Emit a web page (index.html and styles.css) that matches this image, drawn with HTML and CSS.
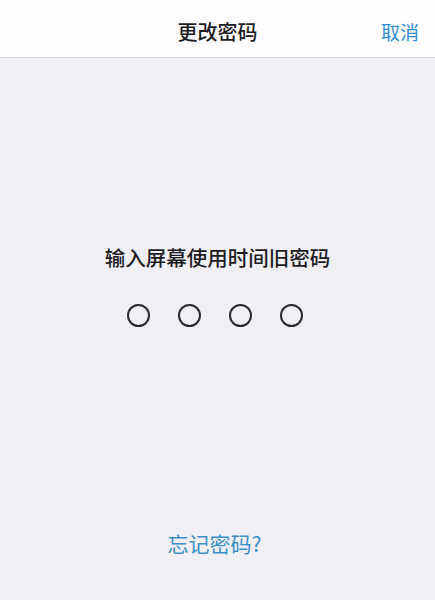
FILE: index.html
```html
<!DOCTYPE html>
<html lang="zh-CN">
<head>
    <meta charset="UTF-8">
    <meta name="viewport" content="width=device-width, initial-scale=1.0">
    <title>更改密码</title>
    <link rel="stylesheet" href="styles.css">
</head>
<body>
    <header class="nav-bar">
        <h1 class="nav-title">更改密码</h1>
        <a class="nav-cancel" href="#">取消</a>
    </header>

    <main class="passcode">
        <p class="passcode-prompt">输入屏幕使用时间旧密码</p>
        <div class="passcode-dots">
            <span class="dot"></span>
            <span class="dot"></span>
            <span class="dot"></span>
            <span class="dot"></span>
        </div>
        <a class="forgot-link" href="#">忘记密码?</a>
    </main>
</body>
</html>
```

FILE: styles.css
```css
body {
    margin: 0;
    padding: 0;
    height: 600px;
    display: flex;
    flex-direction: column;
    background-color: #f0eff4;
    font-family: "Noto Sans CJK SC", "Noto Sans", sans-serif;
    color: #1c1c1e;
}

.nav-bar {
    height: 57px;
    flex-shrink: 0;
    background-color: #fdfdfd;
    border-bottom: 1px solid #d8d8dc;
    display: flex;
    align-items: center;
    justify-content: center;
    position: relative;
}

.nav-title {
    margin: 0;
    font-size: 20px;
    font-weight: 500;
    padding-top: 6px;
}

.nav-cancel {
    position: absolute;
    right: 16px;
    top: 18px;
    font-size: 19px;
    color: #2f8ecf;
    text-decoration: none;
}

.passcode {
    flex: 1;
    display: flex;
    flex-direction: column;
    align-items: center;
}

.passcode-prompt {
    margin: 184px 0 0;
    font-size: 20.5px;
    font-weight: 500;
    line-height: 30px;
}

.passcode-dots {
    display: flex;
    gap: 28px;
    margin-top: 32px;
    padding-right: 5px;
}

.dot {
    box-sizing: border-box;
    width: 23px;
    height: 23px;
    border: 2px solid #2a2a2c;
    border-radius: 50%;
}

.forgot-link {
    margin-top: 201px;
    font-size: 21px;
    color: #3a8fc8;
    text-decoration: none;
    padding-right: 6px;
}
```
